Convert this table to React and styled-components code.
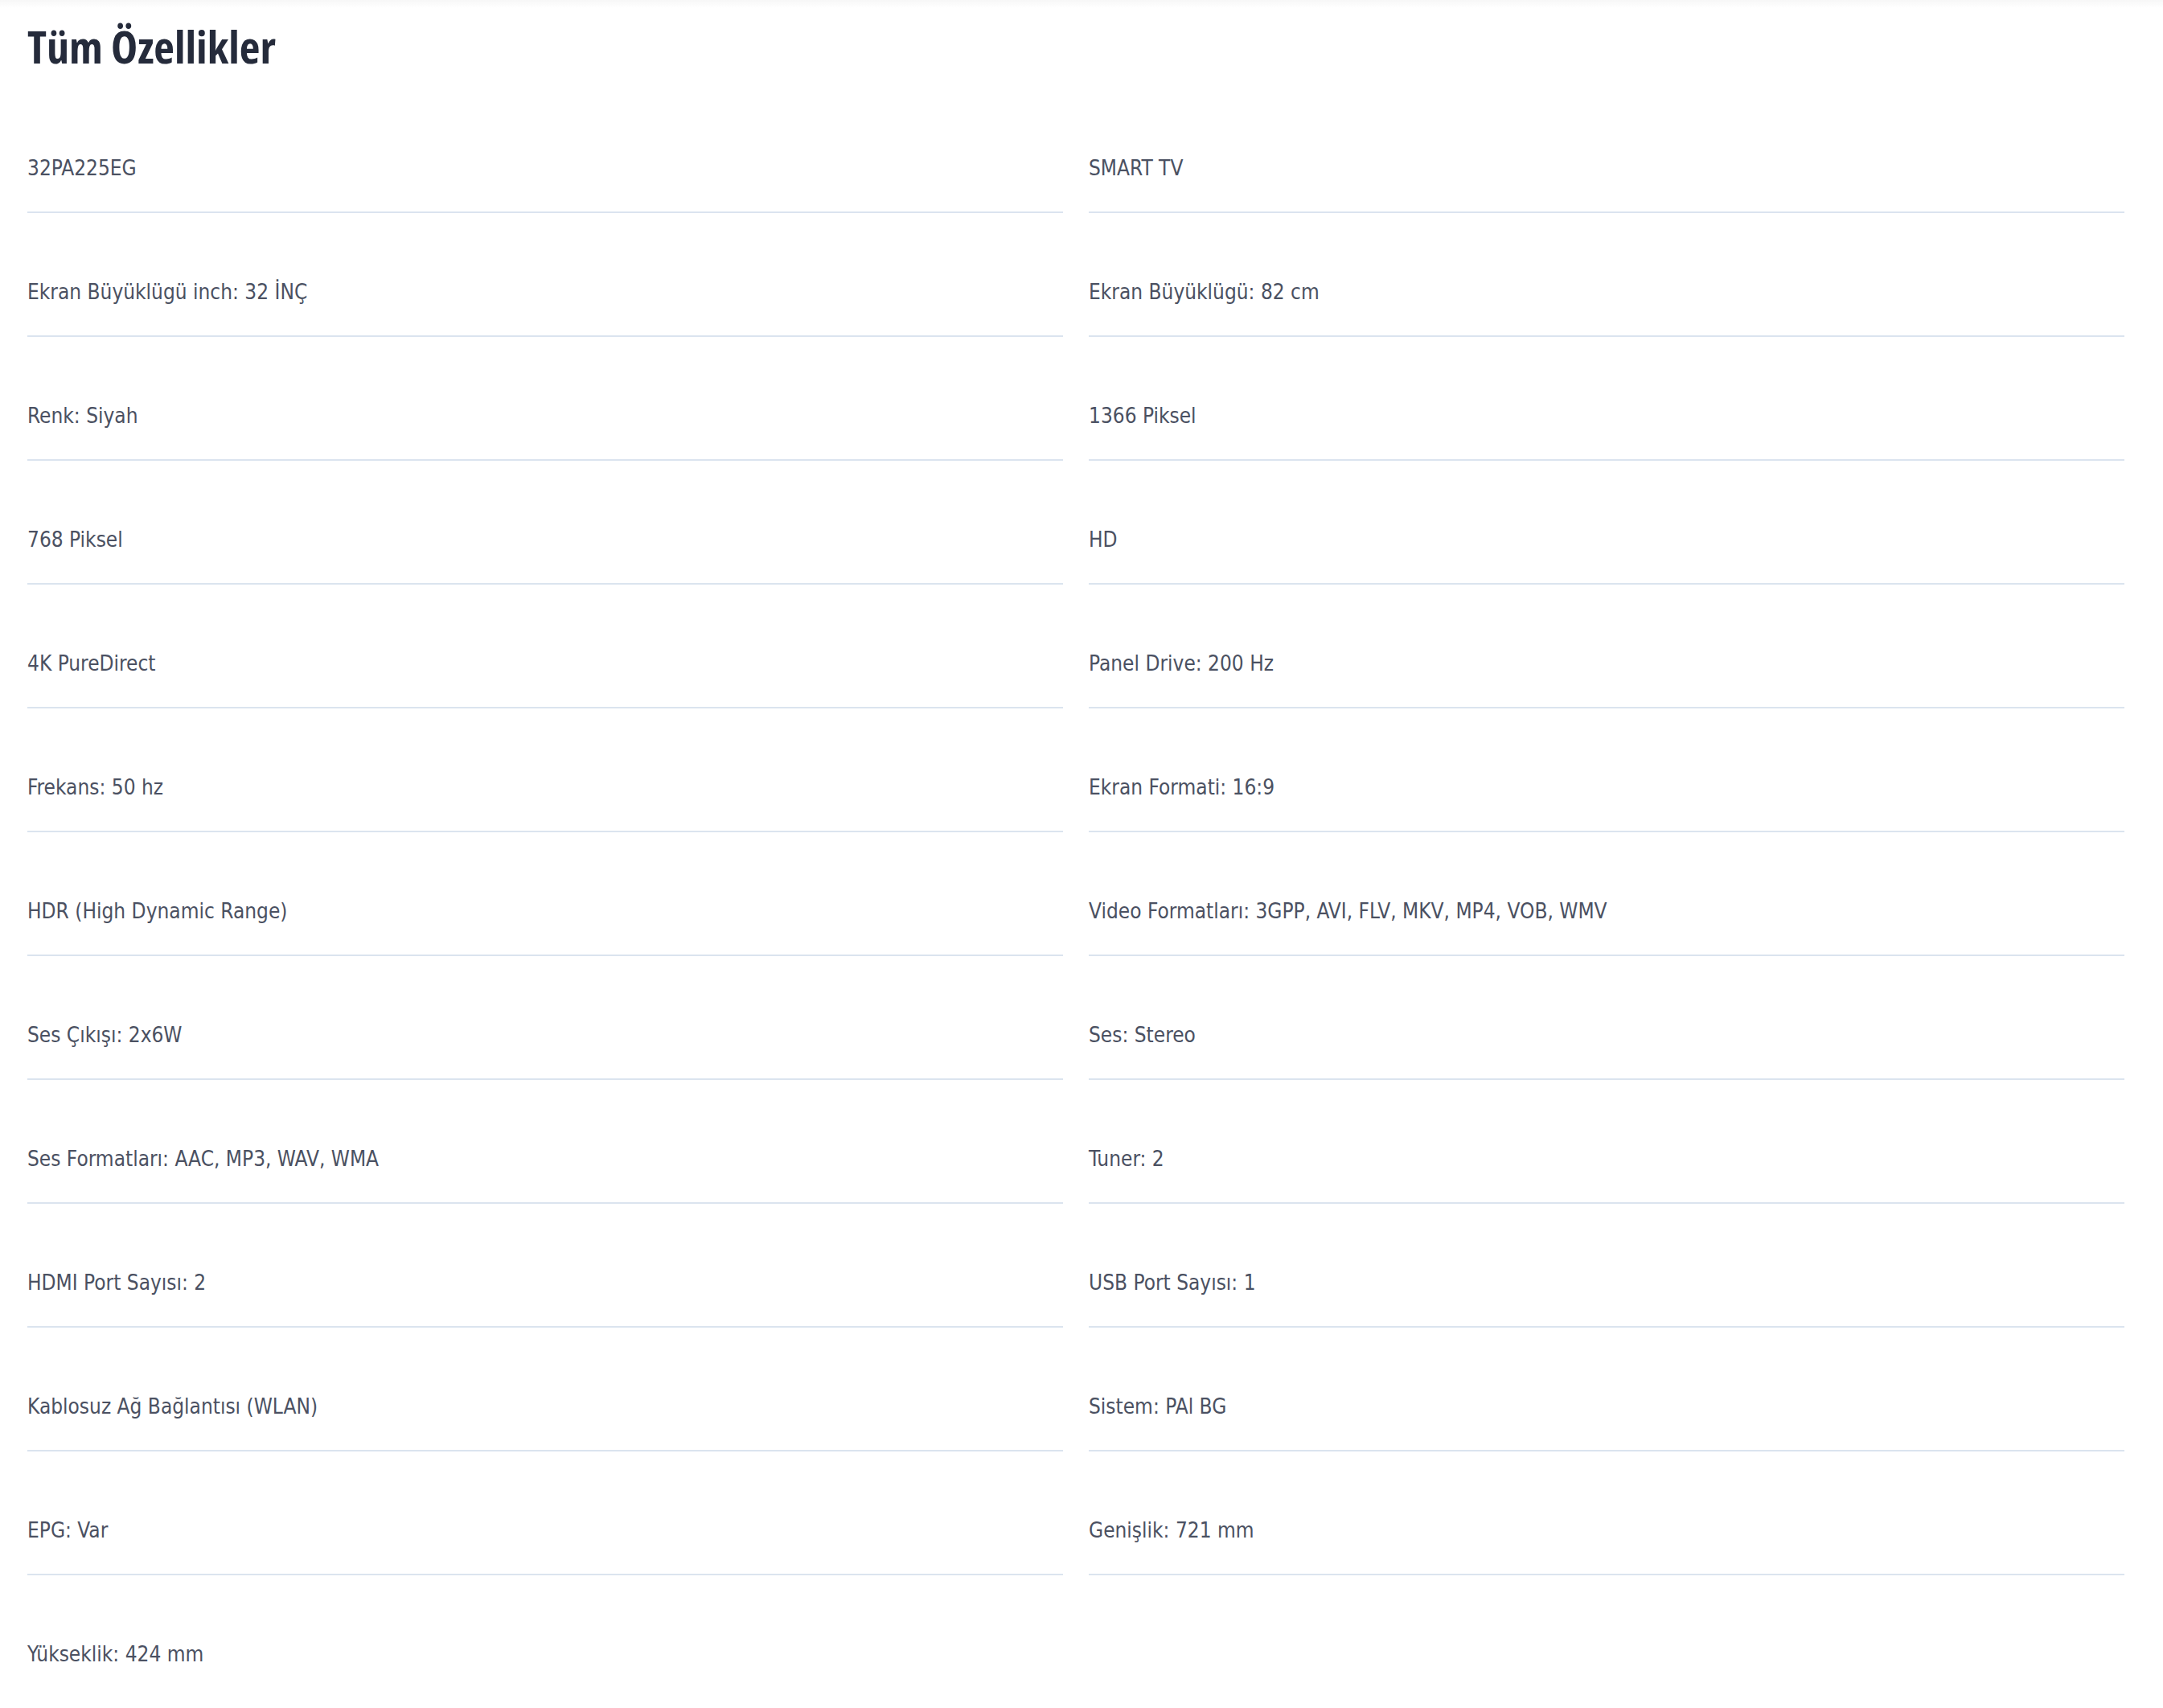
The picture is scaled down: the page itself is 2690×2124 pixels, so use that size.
import styled, { createGlobalStyle } from 'styled-components'

const specs = [
  '32PA225EG',
  'SMART TV',
  'Ekran Büyüklügü inch: 32 İNÇ',
  'Ekran Büyüklügü: 82 cm',
  'Renk: Siyah',
  '1366 Piksel',
  '768 Piksel',
  'HD',
  '4K PureDirect',
  'Panel Drive: 200 Hz',
  'Frekans: 50 hz',
  'Ekran Formati: 16:9',
  'HDR (High Dynamic Range)',
  'Video Formatları: 3GPP, AVI, FLV, MKV, MP4, VOB, WMV',
  'Ses Çıkışı: 2x6W',
  'Ses: Stereo',
  'Ses Formatları: AAC, MP3, WAV, WMA',
  'Tuner: 2',
  'HDMI Port Sayısı: 2',
  'USB Port Sayısı: 1',
  'Kablosuz Ağ Bağlantısı (WLAN)',
  'Sistem: PAl BG',
  'EPG: Var',
  'Genişlik: 721 mm',
  'Yükseklik: 424 mm',
]

function App() {
  return (
    <>
      <GlobalStyle />
      <Page>
        <Title>Tüm Özellikler</Title>
        <SpecGrid>
          {specs.map((text, i) => (
            <SpecItem key={i} $last={i === specs.length - 1}>
              {text}
            </SpecItem>
          ))}
        </SpecGrid>
      </Page>
    </>
  )
}

export default App

const GlobalStyle = createGlobalStyle`
  html, body {
    margin: 0;
    padding: 0;
    background: #ffffff;
  }
  body {
    font-family: "DejaVu Sans Condensed", "Liberation Sans", sans-serif;
  }
`

const Page = styled.div`
  width: 2690px;
  min-height: 2124px;
  box-sizing: border-box;
  padding: 25px 48px 0 34px;
  background: linear-gradient(to bottom, #f7f7f7 0px, #ffffff 10px);
`

const Title = styled.h2`
  margin: 0 0 22px;
  font-family: "Open Sans", "DejaVu Sans Condensed", sans-serif;
  font-stretch: condensed;
  font-size: 56px;
  line-height: 64px;
  font-weight: 700;
  color: #252b3b;
`

const SpecGrid = styled.div`
  display: grid;
  grid-template-columns: 1fr 1fr;
  column-gap: 32px;
`

const SpecItem = styled.div`
  padding: 80px 0 36px;
  font-size: 26px;
  line-height: 36px;
  color: #4b5162;
  border-bottom: 2px solid ${(p) => (p.$last ? 'transparent' : '#dbe4ef')};
`
